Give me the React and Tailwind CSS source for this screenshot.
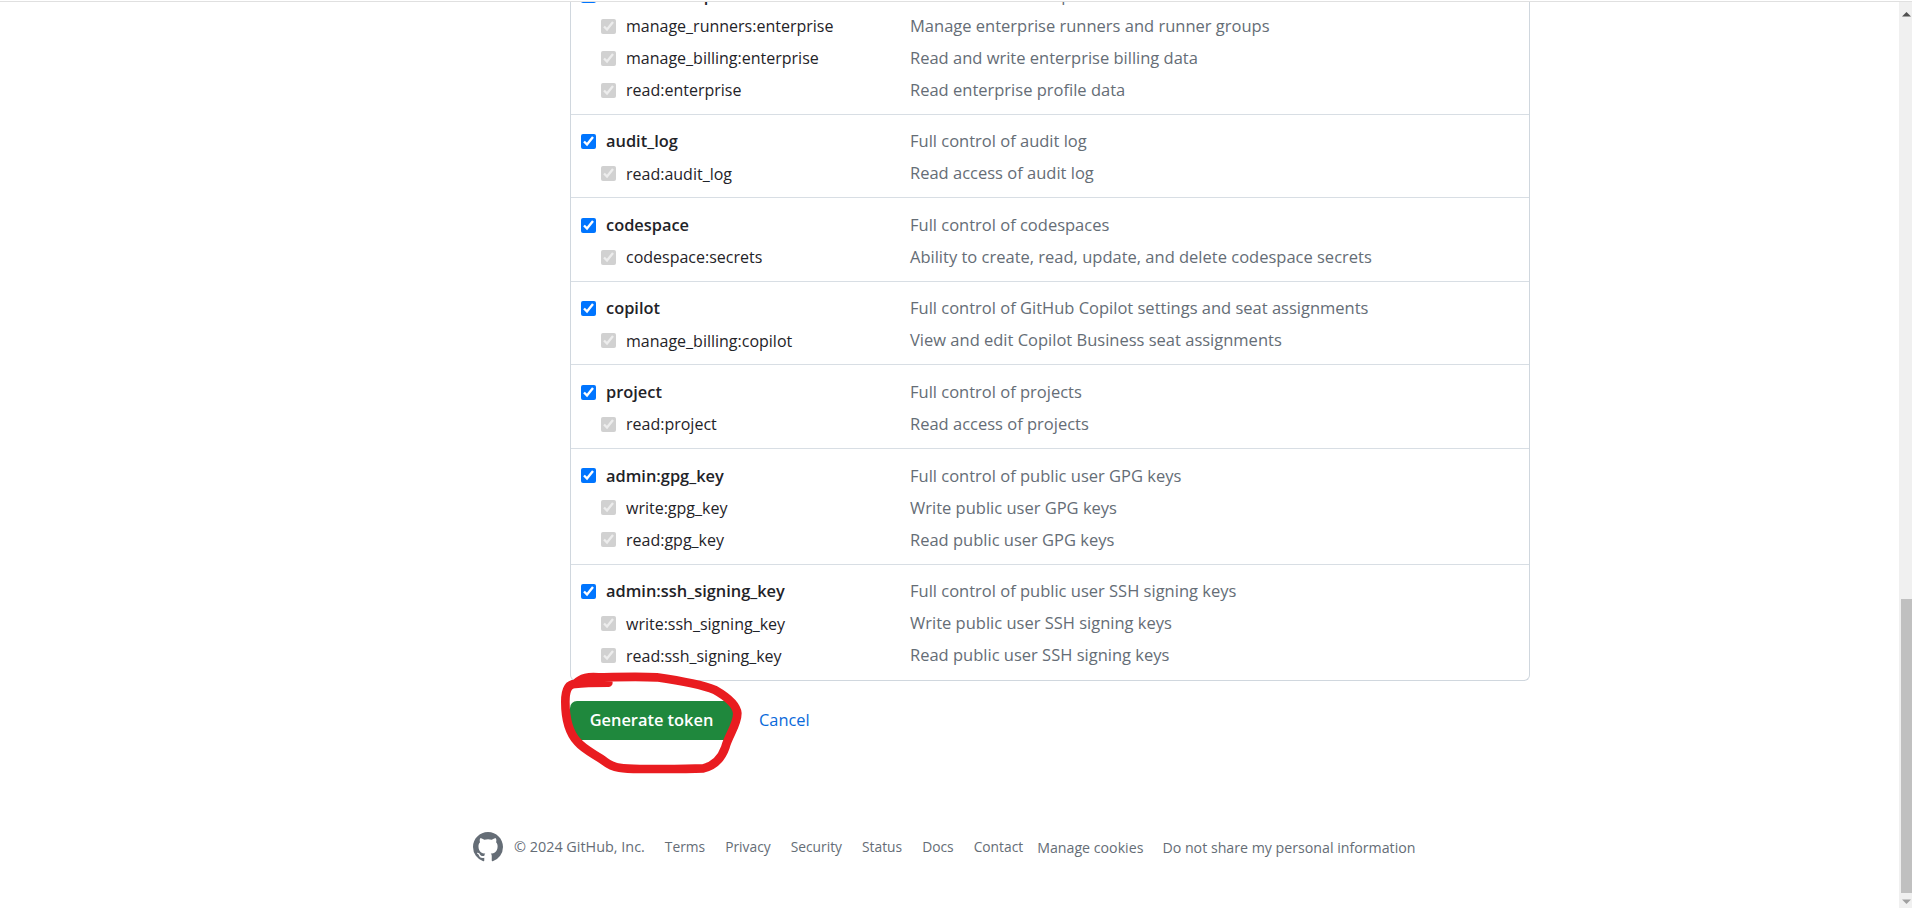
import React from "react";

const sections = [
  {
    clipped: true,
    name: "admin:enterprise",
    desc: "Full control of enterprises",
    subs: [
      ["manage_runners:enterprise", "Manage enterprise runners and runner groups"],
      ["manage_billing:enterprise", "Read and write enterprise billing data"],
      ["read:enterprise", "Read enterprise profile data"],
    ],
  },
  {
    name: "audit_log",
    desc: "Full control of audit log",
    subs: [["read:audit_log", "Read access of audit log"]],
  },
  {
    name: "codespace",
    desc: "Full control of codespaces",
    subs: [["codespace:secrets", "Ability to create, read, update, and delete codespace secrets"]],
  },
  {
    name: "copilot",
    desc: "Full control of GitHub Copilot settings and seat assignments",
    subs: [["manage_billing:copilot", "View and edit Copilot Business seat assignments"]],
  },
  {
    name: "project",
    desc: "Full control of projects",
    subs: [["read:project", "Read access of projects"]],
  },
  {
    name: "admin:gpg_key",
    desc: "Full control of public user GPG keys",
    subs: [
      ["write:gpg_key", "Write public user GPG keys"],
      ["read:gpg_key", "Read public user GPG keys"],
    ],
  },
  {
    name: "admin:ssh_signing_key",
    desc: "Full control of public user SSH signing keys",
    subs: [
      ["write:ssh_signing_key", "Write public user SSH signing keys"],
      ["read:ssh_signing_key", "Read public user SSH signing keys"],
    ],
  },
];

function ScopeRow({ label, desc, sub, short }) {
  return (
    <div className={`flex items-center ${short ? "h-[29px]" : "h-8"}`}>
      <div className={`flex w-[339px] items-center gap-[10px] ${sub ? "pl-[30px]" : "pl-[10px]"}`}>
        <input
          type="checkbox"
          checked
          readOnly
          disabled={sub}
          className="m-0 h-[15px] w-[15px] shrink-0"
        />
        <span className={sub ? "text-[16px] text-[#1f2328]" : "font-semibold text-[#1f2328]"}>{label}</span>
      </div>
      <div className="text-[16.5px] text-[#656d76]">{desc}</div>
    </div>
  );
}

function Section({ s }) {
  return (
    <div className={`border-b border-[#d8dee4] pb-[7.6px] last:border-b-0 last:pb-[8.6px] ${s.clipped ? "-mt-[21px]" : "pt-[11px]"}`}>
      <ScopeRow label={s.name} desc={s.desc} short={s.clipped} />
      {s.subs.map(([label, desc]) => (
        <ScopeRow key={label} label={label} desc={desc} sub />
      ))}
    </div>
  );
}

export default function App() {
  const links = ["Terms", "Privacy", "Security", "Status", "Docs"];
  return (
    <div className="flex h-[908px] flex-col overflow-hidden bg-white font-['Open_Sans','Liberation_Sans',sans-serif] text-[16.4px]">
      <div className="relative z-10 h-[2px] shrink-0 border-b border-[#e0e0e0] bg-white"></div>
      <div className="flex min-h-0 flex-1">
        <main className="relative min-w-0 flex-1">
          <div className="ml-[570px] w-[960px] rounded-b-md border border-t-0 border-[#d0d7de]">
            {sections.map((s) => (
              <Section key={s.name} s={s} />
            ))}
          </div>

          <div className="ml-[570px] mt-5 flex items-center">
            <button className="h-[39px] w-[163px] rounded-[7px] bg-[#1f883d] font-semibold text-white">
              Generate token
            </button>
            <a className="ml-[26px] text-[#0969da]">Cancel</a>
          </div>

          {/* hand drawn circle round the button */}
          <svg className="absolute left-[540px] top-[658px]" width="300" height="120" viewBox="0 0 900 360" fill="none">
            <path
              d="M105 72 C85 72 76 90 76 125 C76 170 85 215 112 245 C135 272 170 285 195 305 C220 325 250 327 300 327 C370 327 430 328 490 325 C530 315 548 285 556 262 C566 225 592 195 592 160 C590 135 560 110 525 90 C480 72 420 62 350 52 C290 48 215 52 175 52 C145 50 125 52 105 72 M105 72 C135 68 170 68 205 68"
              stroke="#e91c20"
              strokeWidth="26"
              strokeLinecap="round"
              strokeLinejoin="round"
            />
          </svg>

          <footer className="mt-[92px] flex items-center pl-[473px] text-[14.2px] text-[#656d76]">
            <svg width="30" height="30" viewBox="0 0 16 16" fill="#656d76" className="mr-[11px]">
              <path d="M8 0c4.42 0 8 3.58 8 8a8.013 8.013 0 0 1-5.45 7.59c-.4.08-.55-.17-.55-.38 0-.27.01-1.13.01-2.2 0-.75-.25-1.23-.54-1.48 1.78-.2 3.65-.88 3.65-3.95 0-.88-.31-1.59-.82-2.15.08-.2.36-1.02-.08-2.12 0 0-.67-.22-2.2.82-.64-.18-1.32-.27-2-.27-.68 0-1.36.09-2 .27-1.53-1.03-2.2-.82-2.2-.82-.44 1.1-.16 1.92-.08 2.12-.51.56-.82 1.28-.82 2.15 0 3.06 1.86 3.75 3.64 3.95-.23.2-.44.55-.51 1.07-.46.21-1.61.55-2.33-.66-.15-.24-.6-.83-1.23-.82-.67.01-.27.38.01.53.34.19.73.9.82 1.13.16.45.68 1.31 2.69.94 0 .67.01 1.3.01 1.49 0 .21-.15.45-.55.38A7.995 7.995 0 0 1 0 8c0-4.42 3.58-8 8-8Z" />
            </svg>
            <span className="text-[14.4px]">© 2024 GitHub, Inc.</span>
            <nav className="ml-5 flex items-center gap-5 text-[13.8px]">
              {links.map((l) => (
                <a key={l}>{l}</a>
              ))}
              <a>Contact</a>
            </nav>
            <a className="ml-[14px]">Manage cookies</a>
            <a className="ml-[19px]">Do not share my personal information</a>
          </footer>
        </main>

        <div className="flex w-[13px] shrink-0 flex-col bg-[#f0f0f0]">
          <svg width="13" height="6" viewBox="0 0 13 6" className="mt-[9px] shrink-0" fill="#505050">
            <path d="M3 5.5 7.5 1 12 5.5Z" />
          </svg>
          <div className="mt-auto ml-[2px] h-[294px] w-[11px] bg-[#c0c0c0]"></div>
          <svg width="13" height="6" viewBox="0 0 13 6" className="mt-[6px] mb-[3px] shrink-0" fill="#a0a0a0">
            <path d="M3 .5 7.5 5 12 .5Z" />
          </svg>
        </div>
      </div>
    </div>
  );
}
